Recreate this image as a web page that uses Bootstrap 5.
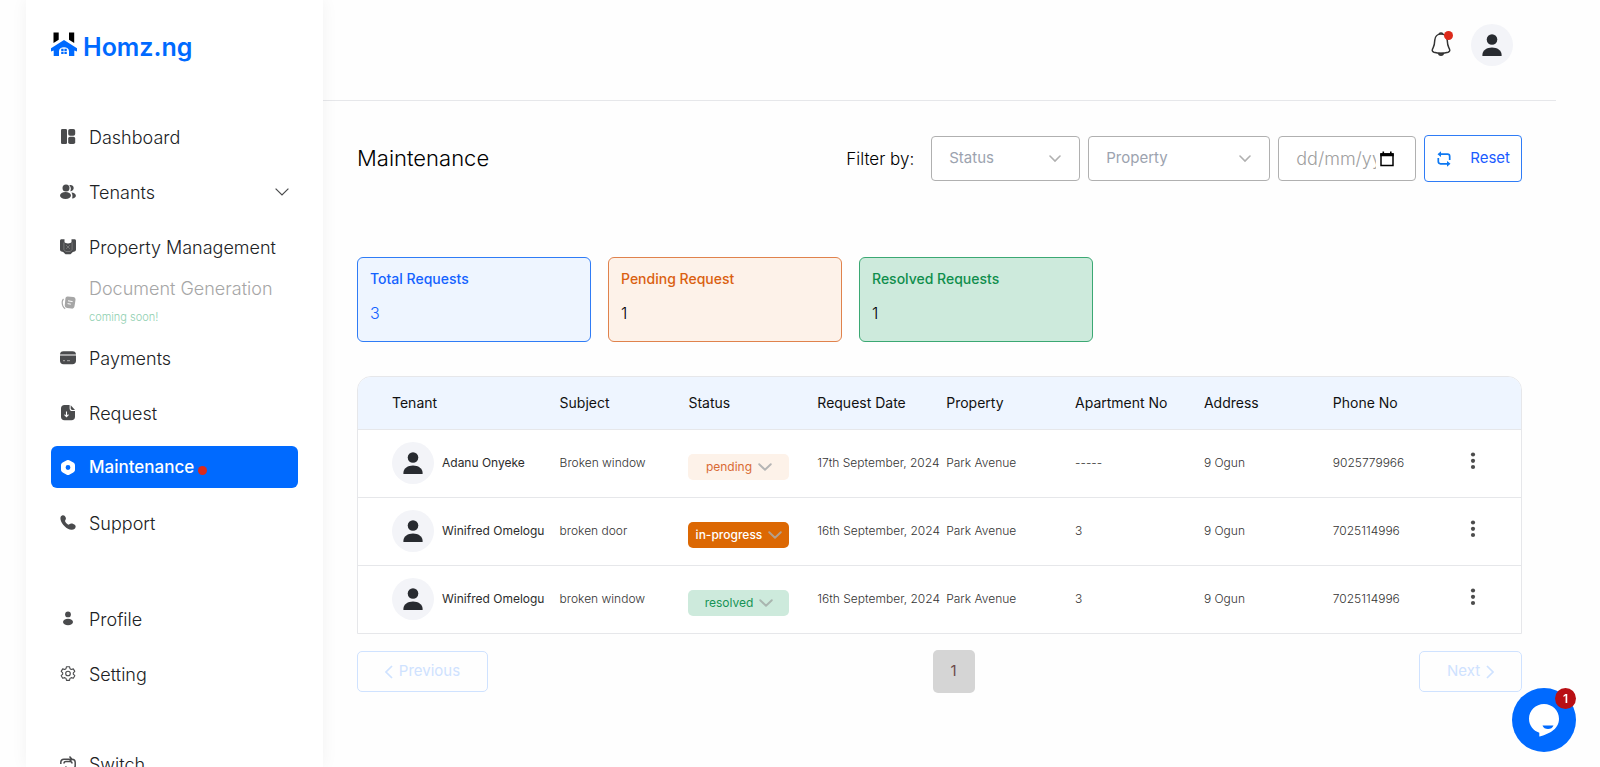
<!DOCTYPE html>
<html lang="en">
<head>
<meta charset="utf-8">
<meta name="viewport" content="width=device-width, initial-scale=1">
<title>Homz.ng – Maintenance</title>
<link href="https://cdn.jsdelivr.net/npm/bootstrap@5.3.0/dist/css/bootstrap.min.css" rel="stylesheet">
<style>
:root { --brand: #006aff; --ink: #202224; --soft: #eef5ff; --line: #e6e7ea; }
body { font-family: Inter, "Liberation Sans", sans-serif; color: var(--ink); background: #fefefe; }
.shell { padding-left: 26px; padding-right: 44px; }
.side { flex: 0 0 297px; padding: 0 25px; box-shadow: 0 0 16px rgba(0,0,0,.05); z-index: 1; }
.brand { height: 115px; padding-top: 31px; gap: 6px; color: var(--brand); font-size: 25px; font-weight: 600; line-height: 32px; }
.side-nav { gap: 13px; }
.side-link { height: 42px; padding: 2px 9px 0; gap: 13px; border-radius: 6px; font-size: 18px; font-weight: 300; color: var(--ink); text-decoration: none; }
.side-link svg { flex: none; color: #4a4b4d; }
.side-link.active { background: var(--brand); color: #fff; font-size: 17px; font-weight: 500; }
.side-link.active svg { color: #fff; }
.side-link.soon { height: 55px; margin: -6px 0; line-height: 28px; color: #a6a6a6; }
.side-link.soon svg { color: #a6a6a6; }
.soon-note { font-size: 11px; color: #8fcfb0; }
.group-gap { margin-top: 41px; }
.dot { width: 9px; height: 9px; border-radius: 50%; background: #dc2a1b; }
.top { height: 101px; padding: 24px 43px 0 0; gap: 20px; border-bottom: 1px solid var(--line); }
.face { width: 42px; height: 42px; flex: none; border-radius: 50%; background: #f3f4f8; color: #282b30; }
.bell-dot { right: -2px; top: 7px; }
.body-area { padding: 34px 34px 0; }
.page-title { font-size: 22px; font-weight: 300; color: #000; }
.filters { gap: 8px; }
.filter-label { font-size: 17px; font-weight: 300; color: #000; margin-right: 9px; padding-top: 2px; }
.field { height: 45px; border: 1px solid #b0b0b0; border-radius: 4px; background-color: #fff; color: #9ca3af; font-size: 15px; padding: 0 17px; box-shadow: none; }
select.field { background-image: url("data:image/svg+xml,%3Csvg xmlns='http://www.w3.org/2000/svg' viewBox='0 0 14 8' fill='none' stroke='%23b0b0b0' stroke-width='1.6' stroke-linecap='round'%3E%3Cpath d='M2 1l5 5 5-5'/%3E%3C/svg%3E"); background-size: 14px 8px; background-position: right 17px center; }
.w-status { width: 149px; }
.w-prop { width: 182px; }
.w-date { width: 138px; }
.date-text { min-width: 0; width: 80px; border: 0; padding: 0; outline: 0; font-size: 18px; font-weight: 300; background: none; color: #a0a0a0; }
.date-text::placeholder { color: #a0a0a0; opacity: 1; }
.reset { height: 47px; padding: 0 11px 0 12px; gap: 19px; border: 1px solid #2f7cf6; border-radius: 4px; background: #fff; color: #1a5cff; font-size: 15px; }
.stats { margin-top: 75px; gap: 17px; }
.stat { width: 234px; height: 85px; padding: 9px 12px; border: 1px solid; border-radius: 6px; }
.stat h2 { font-size: 14px; line-height: 24px; font-weight: 500; margin: 0 0 9px; }
.stat p { font-size: 16px; line-height: 26px; font-weight: 300; margin: 0; color: #000; }
.stat-total { background: var(--soft); border-color: #2f7cf6; color: #1462ff; }
.stat-total p { color: #1462ff; }
.stat-pending { background: #fdf2e9; border-color: #e0824c; color: #da6010; }
.stat-done { background: #cdeadc; border-color: #3ba873; color: #0f8e4c; }
.list-box { margin-top: 34px; border: 1px solid var(--line); border-radius: 14px 14px 0 0; overflow: hidden; background: #fff; }
.requests { table-layout: fixed; width: 100%; white-space: nowrap; }
.requests tr { border-bottom: 1px solid var(--line); }
.requests tbody tr:last-child { border-bottom: 0; }
.requests th { height: 52px; background: var(--soft); font-size: 14px; font-weight: 400; color: #111; }
.requests td { height: 68px; font-size: 12px; font-weight: 300; color: #333; }
.requests th:first-child, .requests td:first-child { padding-left: 34px; }
.c-name { width: 17.25%; }
.c-mid { width: 11.08%; }
.tenant { gap: 8px; color: #2c2c2c; font-weight: 400; }
.pill { width: 101px; height: 26px; margin-top: 8px; gap: 6px; border: 0; border-radius: 5px; font-size: 12px; }
.pill-pending { background: #fdf2e9; color: #d96a33; }
.pill-progress { background: #dc6803; color: #fff; font-weight: 500; }
.pill-resolved { background: #cdeadc; color: #179355; }
.more { border: 0; background: none; padding: 0 8px 5px; color: #4c4c4c; }
.pager { margin-top: 17px; }
.pager button { height: 41px; border-radius: 5px; font-size: 15px; gap: 6px; }
.step { border: 1px solid #cfe2ff; background: transparent; color: #cfe2ff; }
.prev { width: 131px; }
.next { width: 103px; }
.pager .current { width: 42px; height: 43px; margin-top: -1px; border: 0; background: #d5d5d5; color: #6b4a4a; }
.chat { right: 24px; bottom: 15px; width: 64px; height: 64px; border: 0; border-radius: 50%; background: var(--brand); z-index: 5; }
.chat-count { top: 0; right: 0; width: 21px; height: 21px; border-radius: 50%; background: #b90f14; color: #fff; font-size: 12px; font-weight: 600; line-height: 21px; }
</style>
</head>
<body>
<svg width="0" height="0" class="position-absolute" aria-hidden="true">
  <symbol id="person" viewBox="0 0 20 22"><circle cx="10" cy="5.5" r="5.3"/><path d="M.4 22v-1.2C.4 16.400 5 13.600 10 13.600s9.600 2.800 9.600 7.200V22z"/></symbol>
  <symbol id="dots" viewBox="0 0 6 18"><circle cx="3" cy="2.500" r="2.100"/><circle cx="3" cy="8.800" r="2.100"/><circle cx="3" cy="15" r="2.100"/></symbol>
  <symbol id="down" viewBox="0 0 14 8"><path d="M1.200 1.200L7 6.800l5.800-5.600" fill="none" stroke="currentColor" stroke-width="1.900" stroke-linecap="round" stroke-linejoin="round"/></symbol>
</svg>

<div class="shell d-flex vh-100 overflow-hidden">
  <aside class="side bg-white">
    <a class="brand d-flex align-items-start text-decoration-none" href="#">
      <svg width="26" height="28" viewBox="0 0 26 28" aria-hidden="true"><path d="M2.500 1.500h5.200v7.200l-5.200 3.200zM18 1.500h5.200v10.400L18 8.700z" fill="#000"/><path d="M13 9L0 17.200v3.300l2.700-1V25h5.300v-4.800c0-2.400 2.200-4 5-4s5 1.600 5 4V25h5.300v-5.500l2.700 1v-3.300z" fill="#006aff"/><path d="M10.200 17.700h2.400v2.200h-2.400zM13.400 17.700h2.400v2.200h-2.400zM10.200 20.700h2.400v2.200h-2.400zM13.400 20.700h2.400v2.200h-2.400z" fill="#006aff"/></svg>
      <span>Homz.ng</span>
    </a>
    <nav class="side-nav d-flex flex-column" aria-label="Main">
      <a class="side-link d-flex align-items-center" href="#"><svg width="16" height="16" viewBox="0 0 16 16" fill="currentColor"><rect x="1" y="0" width="6" height="15" rx="1.200"/><rect x="8.200" y="0" width="7" height="6.800" rx="1.800"/><rect x="8.200" y="7.800" width="7" height="7.200" rx="1.800"/></svg>Dashboard</a>
      <a class="side-link d-flex align-items-center" href="#"><svg width="16" height="16" viewBox="0 0 16 16" fill="currentColor"><circle cx="6" cy="4" r="3.500"/><ellipse cx="5.500" cy="11.500" rx="5.500" ry="3.500"/><path d="M9.300 1.200c2-.8 4.400.6 4.400 2.900 0 1.900-1.600 3.300-3.500 3.200 1-1.800 1-4.200-.9-6.100zM11.400 8.600c2.500 0 4.500 1.400 4.500 3.200 0 1.500-1.400 2.600-3.800 2.600.6-2.300.4-4.200-.7-5.800z"/></svg>Tenants<svg class="ms-auto" width="14" height="8" viewBox="0 0 14 8"><path d="M.6.6L7 7 13.400.6" fill="none" stroke="currentColor" stroke-width="1.200"/></svg></a>
      <a class="side-link d-flex align-items-center" href="#"><svg width="16" height="16" viewBox="0 0 16 16" fill="currentColor"><path d="M1.500.2h3v2.600c0 .7.500 1.100 1.200 1.200L8 4.600 10.300 4c.7-.1 1.200-.5 1.200-1.200V.2h3c.9 0 1.500.7 1.500 1.500v8.800c0 1-.6 1.800-1.500 2l-1.700.4-2 2c-.3.300-.6.400-1 .4H6.200c-.4 0-.7-.1-1-.4l-2-2-1.700-.4c-.9-.2-1.500-1-1.500-2V1.700C0 .9.600.2 1.500.2z"/><path d="M3.900 3.500v7l1.800 2h4.600l1.800-2v-7M6.200 6.200l3.600 3.600M9.800 6.200L6.200 9.800" fill="none" stroke="#8b8b8b" stroke-width=".7"/></svg>Property Management</a>
      <a class="side-link soon d-flex align-items-center" href="#" aria-disabled="true"><svg width="16" height="16" viewBox="0 0 16 16" fill="currentColor"><path d="M7.700 1.400l5.500.7c1.600.2 2.600 1.400 2.300 3l-1 6.200c-.3 1.600-1.500 2.500-3 2.300L7 12.900c-1.600-.3-2.400-1.500-2.200-3L5.400 3.600c.2-1.500 1-2.300 2.300-2.200z"/><path d="M8 5.800l4.600.8M7.600 8.600l3.200.6" stroke="#fff" fill="none"/><path d="M3.500 4C2 5.500 2 8.500 2.900 11c.6 1.500 1.200 2.100 2.300 2.600" fill="none" stroke="currentColor" stroke-width="1.200"/></svg><span class="d-flex flex-column"><span>Document Generation</span><span class="soon-note">coming soon!</span></span></a>
      <a class="side-link d-flex align-items-center" href="#"><svg width="16" height="14" viewBox="0 0 16 14" fill="currentColor"><path d="M0 3.600C0 1.400 1.300.2 3.500.2h9C14.700.2 16 1.400 16 3.600z"/><path d="M0 4.600h16v5.200c0 2.300-1.300 3.500-3.500 3.500h-9C1.300 13.300 0 12.100 0 9.800z"/><path d="M3 9.700h2M7 9.700h3" stroke="#aaa"/></svg>Payments</a>
      <a class="side-link d-flex align-items-center" href="#"><svg width="16" height="16" viewBox="0 0 16 16" fill="currentColor"><path d="M9.600.100v3.400c0 1.600 1 2.600 2.600 2.600H15v5.700c0 2.200-1.300 3.500-3.500 3.500h-7C2.300 15.300 1 14 1 11.800V3.600C1 1.400 2.300.100 4.500.100z"/><path d="M10.700.300L15 5h-2.600c-1 0-1.700-.7-1.700-1.700z"/><path d="M6.500 6.500v5M4.500 9.700l2 2 2-2" fill="none" stroke="#fff" stroke-width="1.100"/></svg>Request</a>
      <a class="side-link active d-flex align-items-center" href="#" aria-current="page"><svg width="16" height="16" viewBox="0 0 16 16" fill="currentColor"><path fill-rule="evenodd" d="M6.300.5c1.200-.7 2.200-.7 3.400 0l3.600 2.100C14.500 3.300 15 4.100 15 5.400v4.200c0 1.300-.5 2.100-1.700 2.800l-3.600 2.100c-1.200.7-2.200.7-3.400 0l-3.600-2.100C1.500 11.700 1 10.900 1 9.600V5.400c0-1.300.5-2.100 1.700-2.800zM8 5.100a2.400 2.400 0 100 4.800 2.400 2.400 0 000-4.800z"/></svg><span class="d-flex align-items-center gap-1">Maintenance <span class="dot mt-1"></span></span></a>
      <a class="side-link d-flex align-items-center" href="#"><svg width="16" height="16" viewBox="0 0 16 16" fill="currentColor"><path d="M2.600.300C3.800-.1 5 .9 5.600 2.200c.5 1.200.4 2-.2 2.800-.5.600-.4 1.100 0 1.900.6 1 1.300 1.800 2.200 2.400.7.500 1.200.4 1.800-.1 1-.8 2.400-.9 3.900-.2 1.700.7 2.600 1.700 2.300 3.100-.4 1.900-2 2.800-4.200 2.600C7 14.300 1.400 9.500.5 4.200.2 2.200.9.800 2.600.300z"/></svg>Support</a>
      <a class="side-link group-gap d-flex align-items-center" href="#"><svg width="16" height="16" viewBox="0 0 16 16" fill="currentColor"><circle cx="8" cy="3.400" r="2.900"/><ellipse cx="8" cy="11" rx="5" ry="3.300"/></svg>Profile</a>
      <a class="side-link d-flex align-items-center" href="#"><svg width="16" height="16" viewBox="0 0 16 16" fill="none" stroke="currentColor" stroke-width="1.100" stroke-linejoin="round"><circle cx="8" cy="7.500" r="2.300"/><path d="M6.500.7h3l.5 2 1.300.8 2-.6 1.500 2.500-1.500 1.500v1.300l1.500 1.500-1.500 2.500-2-.6-1.300.8-.5 2h-3l-.5-2-1.300-.8-2 .6-1.500-2.500 1.500-1.500V6.900L1.200 5.400l1.500-2.500 2 .6L6 2.700z"/></svg>Setting</a>
      <a class="side-link mt-4 pt-4 d-flex align-items-center" href="#"><svg width="16" height="16" viewBox="0 0 16 16" fill="none" stroke="currentColor" stroke-width="1.500"><path d="M.8 8V6.500c0-2 1.200-3.300 3.200-3.300h8c2 0 3.200 1.300 3.200 3.300v3c0 2-1.200 3.300-3.200 3.300H4M9.500.600L12 3.200 9.500 5.400M4 7.500C4 6 5 5.500 6 5.500h4c1 0 2 .5 2 2M6.500 10.600L4 13l2.500 2.400"/></svg>Switch</a>
    </nav>
  </aside>

  <div class="flex-grow-1 d-flex flex-column">
    <header class="top d-flex justify-content-end align-items-start">
      <button class="btn p-0 border-0 position-relative" type="button" aria-label="Notifications"><svg width="20" height="42" viewBox="0 0 20 42" fill="none" stroke="#333" stroke-width="1.500" stroke-linejoin="round"><path d="M10 10c-3.600 0-6 2.600-6.200 6-.2 4-.4 5.500-1.600 7.600-1.600 2.700-1.200 4 .7 4.600 4.500 1.300 9.700 1.300 14.200 0 1.900-.6 2.300-1.900.7-4.600-1.200-2.100-1.400-3.600-1.600-7.600C16 12.600 13.600 10 10 10z"/><path d="M8 9.800c1-.7 3-.7 4 0"/><path d="M7.500 29.400c.8 2.400 4.200 2.400 5 0z" fill="#888"/></svg><span class="dot bell-dot position-absolute"></span></button>
      <button class="face btn p-0 border-0 d-flex align-items-center justify-content-center" type="button" aria-label="Account"><svg width="20" height="22" fill="currentColor"><use href="#person"/></svg></button>
    </header>

    <main class="body-area">
      <div class="d-flex align-items-center justify-content-between">
        <h1 class="page-title mb-0">Maintenance</h1>
        <form class="filters d-flex align-items-center">
          <label class="filter-label" for="status">Filter by:</label>
          <select class="field form-select w-status" id="status"><option>Status</option></select>
          <select class="field form-select w-prop" aria-label="Property"><option>Property</option></select>
          <label class="field w-date d-flex align-items-center overflow-hidden">
            <input class="date-text" type="text" placeholder="dd/mm/yyyy" aria-label="Date">
            <svg class="flex-shrink-0 ms-1" width="14" height="16" viewBox="0 0 14 16"><path d="M1 3h12v11.500H1z" fill="none" stroke="#000" stroke-width="1.500"/><path d="M.3 2.200h13.400v3H.3zM2.500.5h1.600v2H2.500zM10 .5h1.600v2H10z"/></svg>
          </label>
          <button class="reset d-flex align-items-center" type="reset"><svg width="14" height="16" viewBox="0 0 14 16" fill="none" stroke="#0d78f2" stroke-width="1.700"><path d="M3 3.200h7.500c1.500 0 2.200.7 2.200 2.200V9M11 12.800H3.500c-1.500 0-2.200-.7-2.200-2.200V7"/><path d="M4 .300v5.800L.5 3.200zM10 9.900v5.800l3.500-2.900z" fill="#0d78f2" stroke="none"/></svg>Reset</button>
        </form>
      </div>

      <div class="stats d-flex">
        <section class="stat stat-total"><h2>Total Requests</h2><p>3</p></section>
        <section class="stat stat-pending"><h2>Pending Request</h2><p>1</p></section>
        <section class="stat stat-done"><h2>Resolved Requests</h2><p>1</p></section>
      </div>

      <div class="list-box">
        <table class="requests align-middle">
          <thead>
            <tr><th class="c-name">Tenant</th><th class="c-mid">Subject</th><th class="c-mid">Status</th><th class="c-mid">Request Date</th><th class="c-mid">Property</th><th class="c-mid">Apartment No</th><th class="c-mid">Address</th><th class="c-mid">Phone No</th><th aria-label="Actions"></th></tr>
          </thead>
          <tbody>
            <tr>
              <td><div class="tenant d-flex align-items-center"><span class="face d-flex align-items-center justify-content-center"><svg width="20" height="22" fill="currentColor"><use href="#person"/></svg></span>Adanu Onyeke</div></td>
              <td>Broken window</td>
              <td><button class="pill pill-pending d-flex align-items-center justify-content-center" type="button">pending <svg width="14" height="8" color="#b5b5b5"><use href="#down"/></svg></button></td>
              <td>17th September, 2024</td><td>Park Avenue</td><td>-----</td><td>9 Ogun</td><td>9025779966</td>
              <td><button class="more" type="button" aria-label="More"><svg width="6" height="18" fill="currentColor"><use href="#dots"/></svg></button></td>
            </tr>
            <tr>
              <td><div class="tenant d-flex align-items-center"><span class="face d-flex align-items-center justify-content-center"><svg width="20" height="22" fill="currentColor"><use href="#person"/></svg></span>Winifred Omelogu</div></td>
              <td>broken door</td>
              <td><button class="pill pill-progress d-flex align-items-center justify-content-center p-0" type="button">in-progress <svg width="14" height="8" color="#b5a08c"><use href="#down"/></svg></button></td>
              <td>16th September, 2024</td><td>Park Avenue</td><td>3</td><td>9 Ogun</td><td>7025114996</td>
              <td><button class="more" type="button" aria-label="More"><svg width="6" height="18" fill="currentColor"><use href="#dots"/></svg></button></td>
            </tr>
            <tr>
              <td><div class="tenant d-flex align-items-center"><span class="face d-flex align-items-center justify-content-center"><svg width="20" height="22" fill="currentColor"><use href="#person"/></svg></span>Winifred Omelogu</div></td>
              <td>broken window</td>
              <td><button class="pill pill-resolved d-flex align-items-center justify-content-center" type="button">resolved <svg width="14" height="8" color="#a9b5af"><use href="#down"/></svg></button></td>
              <td>16th September, 2024</td><td>Park Avenue</td><td>3</td><td>9 Ogun</td><td>7025114996</td>
              <td><button class="more" type="button" aria-label="More"><svg width="6" height="18" fill="currentColor"><use href="#dots"/></svg></button></td>
            </tr>
          </tbody>
        </table>
      </div>

      <div class="pager d-flex justify-content-between">
        <button class="step prev d-flex align-items-center justify-content-center" type="button"><svg width="8" height="14" viewBox="0 0 8 14"><path d="M7 1L1 7l6 6" fill="none" stroke="currentColor" stroke-width="1.700"/></svg>Previous</button>
        <button class="current" type="button">1</button>
        <button class="step next d-flex align-items-center justify-content-center" type="button">Next<svg width="8" height="14" viewBox="0 0 8 14"><path d="M1 1l6 6-6 6" fill="none" stroke="currentColor" stroke-width="1.700"/></svg></button>
      </div>
    </main>
  </div>
</div>

<button class="chat position-fixed p-0 d-flex align-items-center justify-content-center" type="button" aria-label="Open chat">
  <svg width="32" height="34" viewBox="0 0 32 34"><path d="M16 1C7.700 1 1 7.500 1 15.700c0 6.700 4.300 12 10.300 14v3.800c7.600-2 19.700-6.300 19.700-17.800C31 7.500 24.300 1 16 1z" fill="#fff"/><path d="M14.500 22.500h11c-.8 2.400-3 3.600-5.500 3.600s-4.800-1.200-5.500-3.600z" fill="#006aff"/></svg>
  <span class="chat-count position-absolute text-center">1</span>
</button>
<script src="https://cdn.jsdelivr.net/npm/bootstrap@5.3.0/dist/js/bootstrap.bundle.min.js"></script>
</body>
</html>
